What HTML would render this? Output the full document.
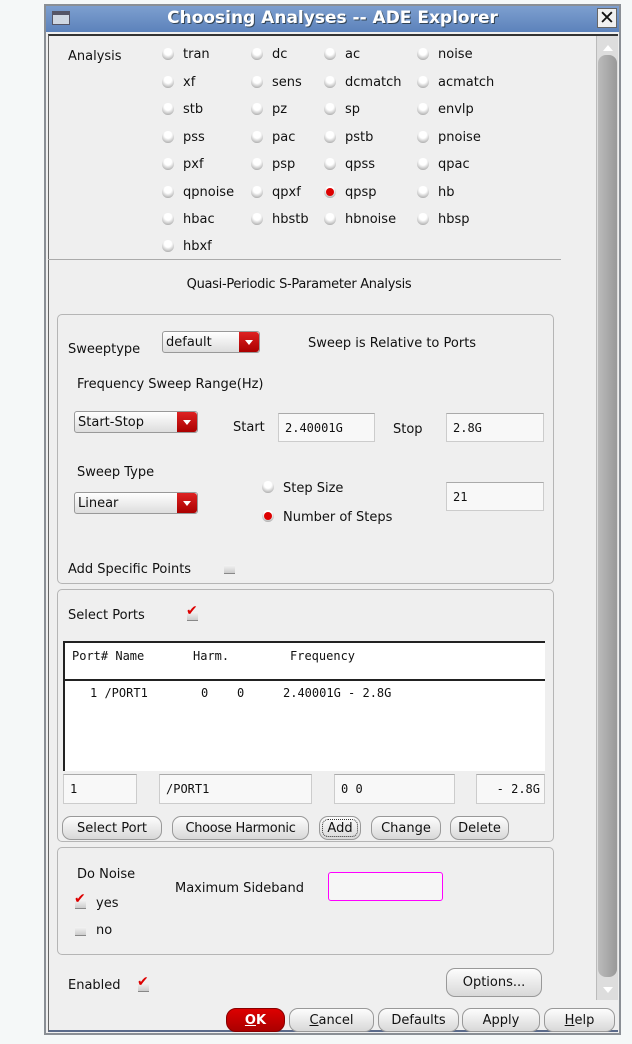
<!DOCTYPE html>
<html><head><meta charset="utf-8"><style>
*{box-sizing:border-box;margin:0;padding:0}
body{width:632px;height:1044px;background:#f5f8f8;position:relative;overflow:hidden;font-family:"DejaVu Sans","Liberation Sans",sans-serif;font-size:13px;color:#111}
.a{position:absolute;white-space:pre}
.win{position:absolute;left:44px;top:4px;width:577px;height:1031px;border:2px solid #8a8f95;background:#efefef}
.title{position:absolute;left:46px;top:6px;width:573px;height:26px;background:linear-gradient(#7d9fcf,#5c82bb);}
.ttxt{position:absolute;left:0;width:573px;top:2px;text-align:center;color:#fff;font-weight:bold;font-size:17px;text-shadow:1px 1px 0 #345}
.panel{position:absolute;left:48px;top:34px;width:570px;height:998px;background:#efefef;border-top:2px solid #333;border-left:1px solid #666;border-bottom:2px solid #5a6a8a}
.rb{position:absolute;width:12px;height:12px;border-radius:50%;background:radial-gradient(circle at 50% 30%,#fff 35%,#bbb 75%,#777 100%)}
.rb.on::after{content:"";position:absolute;left:2px;top:2px;width:8px;height:8px;border-radius:50%;background:#d00}
.grp{position:absolute;left:57px;width:497px;border:1px solid #b5b5b5;border-radius:5px}
.fld{position:absolute;background:#f8f8f8;border:1px solid #ccc;border-top-color:#aaa;font-family:"DejaVu Sans Mono","Liberation Mono",monospace;font-size:12px;padding:7px 0 0 6px;white-space:pre}
.dd{position:absolute;height:22px;border:1px solid #999;border-radius:3px;background:linear-gradient(#fff,#ddd);padding:3px 0 0 3px}
.dd b{position:absolute;right:0;top:0;width:20px;height:20px;background:linear-gradient(#d22,#a00);border-radius:0 3px 3px 0}
.dd b::after{content:"";position:absolute;left:6px;top:8px;border:4px solid transparent;border-top:5px solid #fff}
.btn{position:absolute;height:24px;border:1px solid #999;border-radius:9px;background:linear-gradient(#fdfdfd,#d8d8d8);text-align:center;padding-top:4px}
.cb{position:absolute;width:11px;height:9px;background:linear-gradient(#f4f4f4,#ccc);border-bottom:1px solid #888}
.ck{position:absolute;color:#d00;font-weight:bold;font-size:14px}
.mono{font-family:"DejaVu Sans Mono","Liberation Mono",monospace;font-size:12px}
</style></head><body>
<div class="win"></div>
<div class="title"><div class="ttxt">Choosing Analyses -- ADE Explorer</div>
<div class="a" style="left:6px;top:5px;width:18px;height:14px;background:#cfd7e2;border:1px solid #556;border-top:4px solid #556"></div>
<div class="a" style="left:551px;top:2px;width:20px;height:20px;background:#f0f0f0;border:1px solid #666;font-size:19px;line-height:18px;text-align:center;font-weight:bold">✕</div></div>
<div class="panel"></div>
<div class="a" style="left:596px;top:36px;width:22px;height:964px;background:#ddd;border-left:1px solid #bbb"></div>
<div class="a" style="left:598px;top:55px;width:19px;height:922px;background:linear-gradient(90deg,#bbb,#999);border-radius:8px"></div>
<div class="a" style="left:603px;top:40px;border:5px solid transparent;border-bottom:6px solid #fff"></div>
<div class="a" style="left:603px;top:987px;border:5px solid transparent;border-top:6px solid #fff"></div>

<div class="a" style="left:68px;top:49px">Analysis</div>
<div class="rb" style="left:162px;top:48px"></div><div class="a" style="left:183px;top:47px">tran</div>
<div class="rb" style="left:251px;top:48px"></div><div class="a" style="left:272px;top:47px">dc</div>
<div class="rb" style="left:324px;top:48px"></div><div class="a" style="left:345px;top:47px">ac</div>
<div class="rb" style="left:417px;top:48px"></div><div class="a" style="left:438px;top:47px">noise</div>
<div class="rb" style="left:162px;top:76px"></div><div class="a" style="left:183px;top:75px">xf</div>
<div class="rb" style="left:251px;top:76px"></div><div class="a" style="left:272px;top:75px">sens</div>
<div class="rb" style="left:324px;top:76px"></div><div class="a" style="left:345px;top:75px">dcmatch</div>
<div class="rb" style="left:417px;top:76px"></div><div class="a" style="left:438px;top:75px">acmatch</div>
<div class="rb" style="left:162px;top:103px"></div><div class="a" style="left:183px;top:102px">stb</div>
<div class="rb" style="left:251px;top:103px"></div><div class="a" style="left:272px;top:102px">pz</div>
<div class="rb" style="left:324px;top:103px"></div><div class="a" style="left:345px;top:102px">sp</div>
<div class="rb" style="left:417px;top:103px"></div><div class="a" style="left:438px;top:102px">envlp</div>
<div class="rb" style="left:162px;top:131px"></div><div class="a" style="left:183px;top:130px">pss</div>
<div class="rb" style="left:251px;top:131px"></div><div class="a" style="left:272px;top:130px">pac</div>
<div class="rb" style="left:324px;top:131px"></div><div class="a" style="left:345px;top:130px">pstb</div>
<div class="rb" style="left:417px;top:131px"></div><div class="a" style="left:438px;top:130px">pnoise</div>
<div class="rb" style="left:162px;top:158px"></div><div class="a" style="left:183px;top:157px">pxf</div>
<div class="rb" style="left:251px;top:158px"></div><div class="a" style="left:272px;top:157px">psp</div>
<div class="rb" style="left:324px;top:158px"></div><div class="a" style="left:345px;top:157px">qpss</div>
<div class="rb" style="left:417px;top:158px"></div><div class="a" style="left:438px;top:157px">qpac</div>
<div class="rb" style="left:162px;top:186px"></div><div class="a" style="left:183px;top:185px">qpnoise</div>
<div class="rb" style="left:251px;top:186px"></div><div class="a" style="left:272px;top:185px">qpxf</div>
<div class="rb on" style="left:324px;top:186px"></div><div class="a" style="left:345px;top:185px">qpsp</div>
<div class="rb" style="left:417px;top:186px"></div><div class="a" style="left:438px;top:185px">hb</div>
<div class="rb" style="left:162px;top:213px"></div><div class="a" style="left:183px;top:212px">hbac</div>
<div class="rb" style="left:251px;top:213px"></div><div class="a" style="left:272px;top:212px">hbstb</div>
<div class="rb" style="left:324px;top:213px"></div><div class="a" style="left:345px;top:212px">hbnoise</div>
<div class="rb" style="left:417px;top:213px"></div><div class="a" style="left:438px;top:212px">hbsp</div>
<div class="rb" style="left:162px;top:240px"></div><div class="a" style="left:183px;top:239px">hbxf</div>
<div class="a" style="left:48px;top:259px;width:513px;height:1px;background:#aaa"></div>
<div class="a" style="left:156px;top:277px;width:286px;text-align:center;letter-spacing:-0.3px">Quasi-Periodic S-Parameter Analysis</div>

<div class="grp" style="top:314px;height:270px"></div>
<div class="a" style="left:68px;top:342px">Sweeptype</div>
<div class="dd" style="left:162px;top:331px;width:98px">default<b></b></div>
<div class="a" style="left:308px;top:336px">Sweep is Relative to Ports</div>
<div class="a" style="left:77px;top:377px">Frequency Sweep Range(Hz)</div>
<div class="dd" style="left:74px;top:411px;width:124px">Start-Stop<b></b></div>
<div class="a" style="left:233px;top:420px">Start</div>
<div class="fld" style="left:278px;top:413px;width:97px;height:29px">2.40001G</div>
<div class="a" style="left:393px;top:422px">Stop</div>
<div class="fld" style="left:446px;top:413px;width:98px;height:29px">2.8G</div>
<div class="a" style="left:77px;top:465px">Sweep Type</div>
<div class="dd" style="left:74px;top:492px;width:124px">Linear<b></b></div>
<div class="rb" style="left:262px;top:481px"></div><div class="a" style="left:283px;top:481px">Step Size</div>
<div class="rb on" style="left:262px;top:510px"></div><div class="a" style="left:283px;top:510px">Number of Steps</div>
<div class="fld" style="left:446px;top:482px;width:98px;height:29px">21</div>
<div class="a" style="left:68px;top:562px">Add Specific Points</div>
<div class="cb" style="left:224px;top:565px"></div>

<div class="grp" style="top:589px;height:253px"></div>
<div class="a" style="left:68px;top:608px">Select Ports</div>
<div class="cb" style="left:187px;top:612px"></div><div class="ck" style="left:186px;top:603px">✔</div>
<div class="a" style="left:63px;top:641px;width:482px;height:38px;background:#fff;border-top:2px solid #222;border-left:2px solid #222"></div>
<div class="a mono" style="left:72px;top:649px">Port# Name</div>
<div class="a mono" style="left:193px;top:649px">Harm.</div>
<div class="a mono" style="left:290px;top:649px">Frequency</div>
<div class="a" style="left:63px;top:679px;width:482px;height:92px;background:#fff;border-top:2px solid #222;border-left:2px solid #222"></div>
<div class="a mono" style="left:90px;top:686px">1 /PORT1</div>
<div class="a mono" style="left:201px;top:686px">0</div>
<div class="a mono" style="left:237px;top:686px">0</div>
<div class="a mono" style="left:283px;top:686px">2.40001G - 2.8G</div>
<div class="fld" style="left:63px;top:774px;width:74px;height:30px">1</div>
<div class="fld" style="left:159px;top:774px;width:153px;height:30px">/PORT1</div>
<div class="fld" style="left:334px;top:774px;width:121px;height:30px">0 0</div>
<div class="fld" style="left:476px;top:774px;width:69px;height:30px;text-align:right;padding-right:4px">- 2.8G</div>
<div class="btn" style="left:62px;top:816px;width:100px">Select Port</div>
<div class="btn" style="left:172px;top:816px;width:137px;letter-spacing:-0.3px">Choose Harmonic</div>
<div class="btn" style="left:319px;top:816px;width:42px;outline:1px dotted #333;outline-offset:-4px">Add</div>
<div class="btn" style="left:371px;top:816px;width:70px">Change</div>
<div class="btn" style="left:450px;top:816px;width:59px">Delete</div>

<div class="grp" style="top:847px;height:108px"></div>
<div class="a" style="left:77px;top:867px">Do Noise</div>
<div class="a" style="left:175px;top:881px">Maximum Sideband</div>
<div class="a" style="left:328px;top:872px;width:115px;height:29px;border:1px solid #f0f;border-radius:3px;background:#f6f6f6"></div>
<div class="cb" style="left:75px;top:900px"></div><div class="ck" style="left:74px;top:891px">✔</div>
<div class="a" style="left:96px;top:896px">yes</div>
<div class="cb" style="left:75px;top:927px"></div>
<div class="a" style="left:96px;top:923px">no</div>

<div class="a" style="left:68px;top:978px">Enabled</div>
<div class="cb" style="left:138px;top:983px"></div><div class="ck" style="left:137px;top:974px">✔</div>
<div class="btn" style="left:446px;top:968px;width:96px;height:29px;padding-top:6px">Options...</div>

<div class="btn" style="left:226px;top:1008px;width:59px;background:linear-gradient(#d00,#a00);color:#fff;font-weight:bold;border-color:#800;border-radius:10px"><u>O</u>K</div>
<div class="btn" style="left:289px;top:1008px;width:85px"><u>C</u>ancel</div>
<div class="btn" style="left:378px;top:1008px;width:81px">Defaults</div>
<div class="btn" style="left:462px;top:1008px;width:78px">Apply</div>
<div class="btn" style="left:544px;top:1008px;width:71px"><u>H</u>elp</div>
</body></html>
